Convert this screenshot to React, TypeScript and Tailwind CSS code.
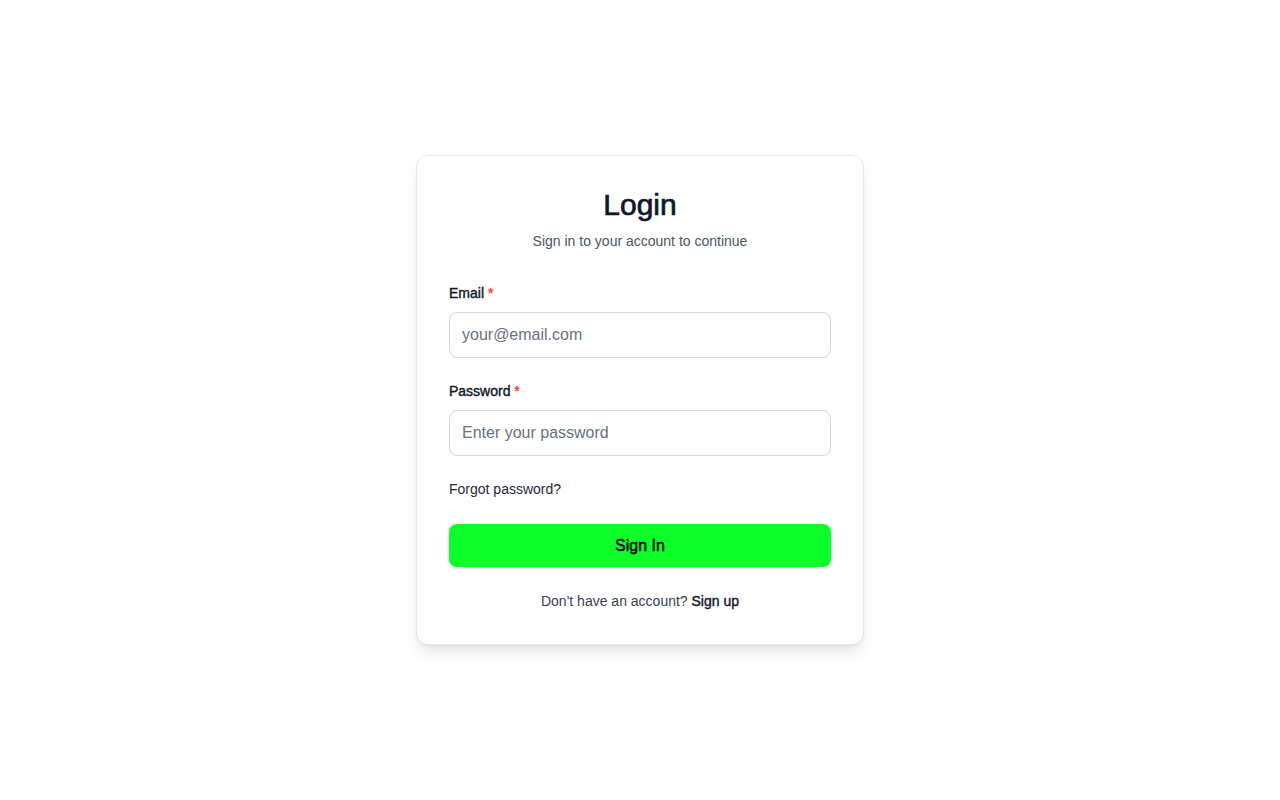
import { useState } from "react";

export default function App() {
  const [email, setEmail] = useState("");
  const [password, setPassword] = useState("");

  return (
    <div className="flex min-h-screen items-center justify-center bg-white font-['Liberation_Sans',Arial,sans-serif]">
      <div className="w-[448px] rounded-xl border border-gray-200 bg-white px-8 pt-[31px] pb-[33px] shadow-lg">
        <div className="text-center">
          <h1 className="text-3xl font-normal text-gray-900 [-webkit-text-stroke:0.7px_#111827]">Login</h1>
          <p className="mt-2 text-sm text-gray-600">Sign in to your account to continue</p>
        </div>

        <form className="mt-8" onSubmit={(e) => e.preventDefault()}>
          <label className="mb-[9px] block text-sm text-gray-900 [-webkit-text-stroke:0.4px_#111827]">
            Email <span className="text-red-500 [-webkit-text-stroke:0.4px_#ef4444]">*</span>
          </label>
          <input
            type="email"
            value={email}
            onChange={(e) => setEmail(e.target.value)}
            placeholder="your@email.com"
            className="h-[46px] w-full rounded-lg border border-gray-300 px-3 text-base text-gray-900 placeholder-gray-500 outline-none"
          />

          <label className="mt-[23px] mb-[9px] block text-sm text-gray-900 [-webkit-text-stroke:0.4px_#111827]">
            Password <span className="text-red-500 [-webkit-text-stroke:0.4px_#ef4444]">*</span>
          </label>
          <input
            type="password"
            value={password}
            onChange={(e) => setPassword(e.target.value)}
            placeholder="Enter your password"
            className="h-[46px] w-full rounded-lg border border-gray-300 px-3 text-base text-gray-900 placeholder-gray-500 outline-none"
          />

          <div className="mt-[21px]">
            <a className="text-sm text-gray-800">Forgot password?</a>
          </div>

          <button
            type="submit"
            className="mt-[23px] h-[43px] w-full rounded-lg bg-[#0dff2b] text-base text-black shadow-sm [-webkit-text-stroke:0.45px_#000]"
          >
            Sign In
          </button>

          <p className="mt-[24px] text-center text-sm text-gray-700">
            Don't have an account?{" "}
            <a className="text-gray-900 [-webkit-text-stroke:0.4px_#111827]">Sign up</a>
          </p>
        </form>
      </div>
    </div>
  );
}
